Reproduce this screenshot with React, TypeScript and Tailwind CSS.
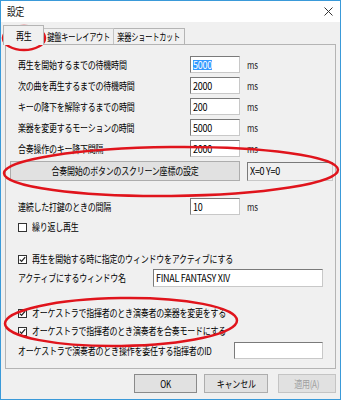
import React from "react";

const F = "font-['Noto_Sans_CJK_JP',sans-serif] tracking-[-0.3px]";

function T({ children, c }: { children: React.ReactNode; c?: boolean }) {
  return (
    <span className={`inline-block whitespace-nowrap scale-x-[0.8] ${c ? "origin-center" : "origin-left"}`}>
      {children}
    </span>
  );
}

function Input({ w, h = 17, value, selected }: { w: number; h?: number; value?: string; selected?: boolean }) {
  return (
    <div
      className="flex items-center bg-white border border-t-[#7a7a7a] border-l-[#7a7a7a] border-r-[#c8c8c8] border-b-[#c8c8c8] pl-[2px] text-[10px] leading-none whitespace-nowrap overflow-hidden"
      style={{ width: w, height: h }}
    >
      {value ? (
        selected ? (
          <span className="inline-block bg-[#3399ff] text-white scale-x-[0.9] origin-left">{value}</span>
        ) : (
          <span className="inline-block scale-x-[0.9] origin-left">{value}</span>
        )
      ) : null}
    </div>
  );
}

function Row({ label, value, selected, mt }: { label: string; value: string; selected?: boolean; mt: string }) {
  return (
    <div className={`flex items-center h-[17px] pl-[12px] ${mt}`}>
      <div className="w-[172px] text-[10px] leading-none">
        <T>{label}</T>
      </div>
      <Input w={50} value={value} selected={selected} />
      <div className="ml-[7px] text-[10px] leading-none text-[#222]">
        <T>ms</T>
      </div>
    </div>
  );
}

function Check({ label, checked, mt }: { label: string; checked?: boolean; mt: string }) {
  return (
    <div className={`flex items-center h-[14px] pl-[12px] ${mt}`}>
      <div className="w-[9px] h-[9px] border border-[#333] bg-white flex items-center justify-center shrink-0">
        {checked ? (
          <svg width="7" height="7" viewBox="0 0 7 7">
            <path d="M0.8 3.6 L2.6 5.4 L6.2 1.2" fill="none" stroke="#222" strokeWidth="1.3" />
          </svg>
        ) : null}
      </div>
      <div className="ml-[5px] text-[10px] leading-none">
        <T>{label}</T>
      </div>
    </div>
  );
}

export default function App() {
  return (
    <div className={`relative w-[341px] h-[400px] border border-[#3a9ad9] bg-[#f0f0f0] flex flex-col text-black ${F}`}>
      {/* title bar */}
      <div className="h-[21px] bg-white flex items-center justify-between pl-[6px] pr-[6px]">
        <div className="text-[11px] leading-none text-[#111]">
          <T>設定</T>
        </div>
        <svg width="9" height="9" viewBox="0 0 9 9" className="mr-[1px]">
          <path d="M0.5 0.5 L8.5 8.5 M8.5 0.5 L0.5 8.5" stroke="#333" strokeWidth="1" />
        </svg>
      </div>
      {/* tab strip */}
      <div className="h-[22px] flex items-end pl-[2px]">
        <div className="relative z-10 -mb-px h-[20px] w-[41px] bg-[#f0f0f0] border border-b-0 border-[#b4b4b4] flex items-center justify-center text-[10px] leading-none">
          <T c>再生</T>
        </div>
        <div className="h-[16px] w-[70px] border-t border-r border-[#c4c4c4] flex items-center justify-center text-[10px] leading-none overflow-hidden">
          <span className="inline-block whitespace-nowrap scale-x-[0.72] origin-center">鍵盤キーレイアウト</span>
        </div>
        <div className="h-[16px] w-[71px] border-t border-r border-[#b4b4b4] flex items-center justify-center text-[10px] leading-none overflow-hidden">
          <span className="inline-block whitespace-nowrap scale-x-[0.72] origin-center">楽器ショートカット</span>
        </div>
      </div>
      {/* panel */}
      <div className="mx-[4px] h-[325px] border border-[#b4b4b4] flex flex-col">
        <Row label="再生を開始するまでの待機時間" value="5000" selected mt="mt-[11px]" />
        <Row label="次の曲を再生するまでの待機時間" value="2000" mt="mt-[4px]" />
        <Row label="キーの降下を解除するまでの時間" value="200" mt="mt-[4px]" />
        <Row label="楽器を変更するモーションの時間" value="5000" mt="mt-[4px]" />
        <Row label="合奏操作のキー降下間隔" value="2000" mt="mt-[4px]" />
        <div className="flex items-center h-[20px] pl-[4px] mt-[4px]">
          <div className="w-[230px] h-[20px] bg-[#e1e1e1] border border-[#adadad] flex items-center justify-center text-[10px] leading-none overflow-hidden">
            <T c>合奏開始のボタンのスクリーン座標の設定</T>
          </div>
          <div className="ml-[7px] w-[86px] h-[19px] bg-[#f0f0f0] border border-t-[#7a7a7a] border-l-[#7a7a7a] border-r-[#c8c8c8] border-b-[#c8c8c8] flex items-center pl-[2px] text-[10px] leading-none">
            <span className="inline-block whitespace-nowrap scale-x-[0.9] origin-left">X=0 Y=0</span>
          </div>
        </div>
        <Row label="連続した打鍵のときの間隔" value="10" mt="mt-[17px]" />
        <Check label="繰り返し再生" mt="mt-[5px]" />
        <Check label="再生を開始する時に指定のウィンドウをアクティブにする" checked mt="mt-[18px]" />
        <div className="flex items-center h-[18px] pl-[12px] mt-[3px]">
          <div className="w-[135px] text-[10px] leading-none">
            <T>アクティブにするウィンドウ名</T>
          </div>
          <Input w={170} h={18} value="FINAL FANTASY XIV" />
        </div>
        <Check label="オーケストラで指揮者のとき演奏者の楽器を変更をする" checked mt="mt-[19px]" />
        <Check label="オーケストラで指揮者のとき演奏者を合奏モードにする" checked mt="mt-[4px]" />
        <div className="flex items-center h-[17px] pl-[12px] mt-[4px]">
          <div className="w-[216px] text-[10px] leading-none">
            <T>オーケストラで演奏者のとき操作を委任する指揮者のID</T>
          </div>
          <Input w={89} />
        </div>
      </div>
      {/* buttons */}
      <div className="flex justify-end mt-[5px] pr-[4px]">
        <div className="w-[63px] h-[19px] bg-[#e1e1e1] border border-[#8a8a8a] flex items-center justify-center text-[10px] leading-none">
          <T c>OK</T>
        </div>
        <div className="ml-[7px] w-[64px] h-[19px] bg-[#e1e1e1] border border-[#adadad] flex items-center justify-center text-[10px] leading-none">
          <T c>キャンセル</T>
        </div>
        <div className="ml-[10px] w-[58px] h-[19px] bg-[#e1e1e1] border border-[#c4c4c4] flex items-center justify-center text-[10px] leading-none text-[#a0a0a0]">
          <T c>適用(A)</T>
        </div>
      </div>
      {/* red annotation ellipses */}
      <svg className="absolute left-[-1px] top-[-1px] pointer-events-none" width="341" height="400" viewBox="0 0 341 400">
        <ellipse cx="24" cy="38" rx="21" ry="12" fill="none" stroke="#e0141c" strokeWidth="2.5" />
        <ellipse cx="171" cy="171.5" rx="167" ry="24.5" fill="none" stroke="#e0141c" strokeWidth="2.5" transform="rotate(-0.6 171 171.5)" />
        <ellipse cx="121" cy="322" rx="116" ry="24" fill="none" stroke="#e0141c" strokeWidth="2.5" transform="rotate(-0.8 121 322)" />
      </svg>
    </div>
  );
}
